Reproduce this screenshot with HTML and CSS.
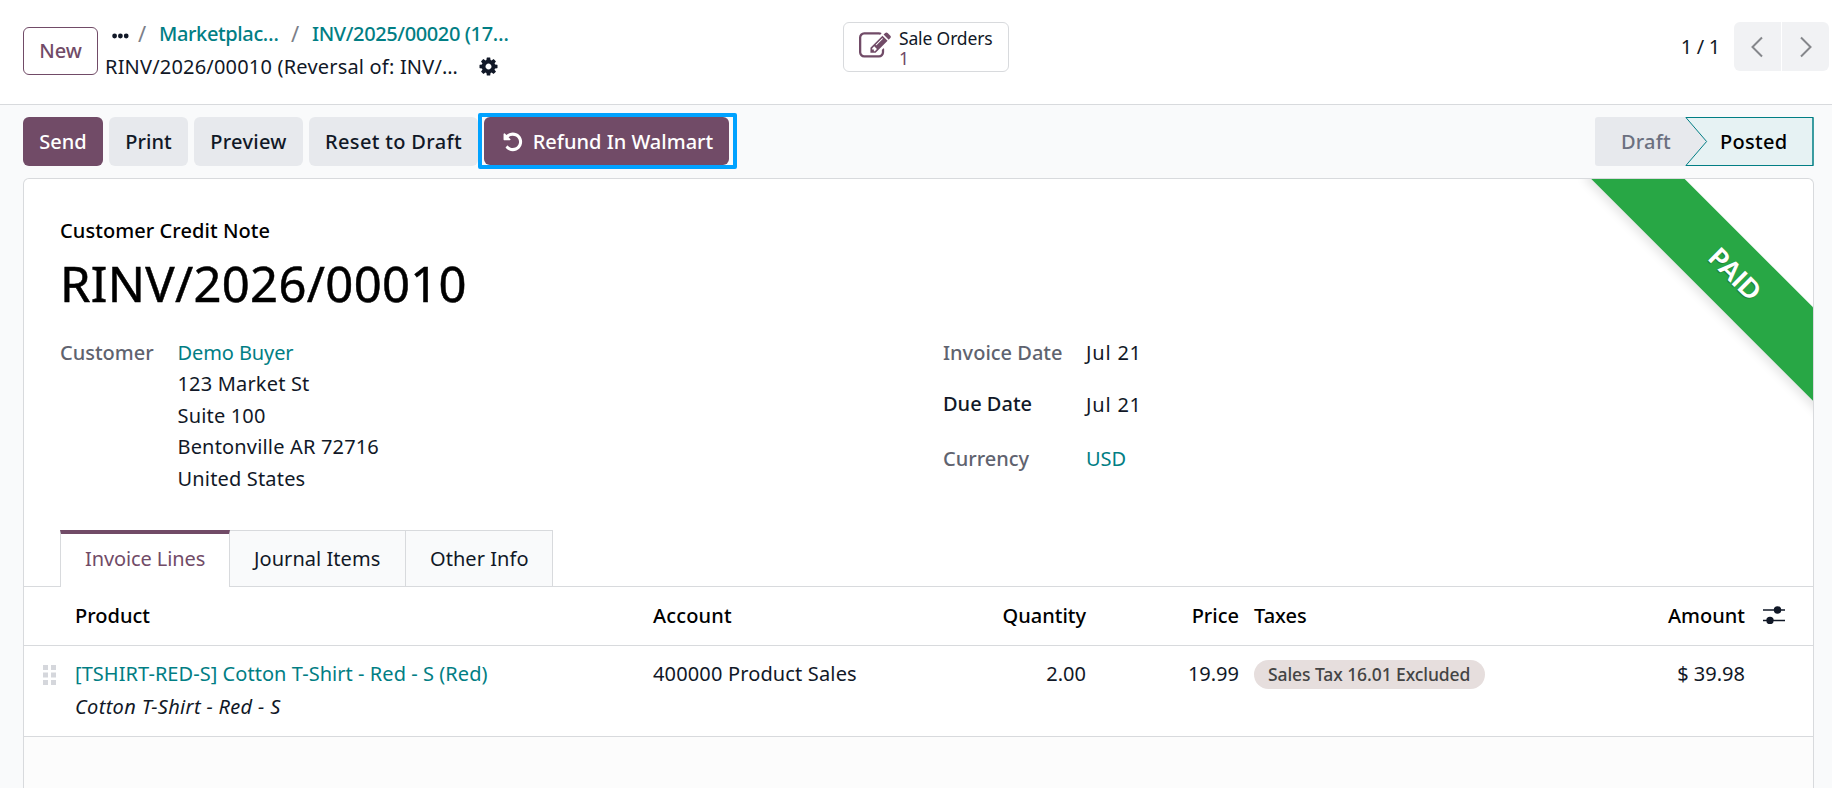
FILE: index.html
```html
<!DOCTYPE html>
<html lang="en">
<head>
    <meta charset="UTF-8">
    <meta name="viewport" content="width=device-width, initial-scale=1.0">
    <title>RINV/2026/00010</title>
    <link rel="stylesheet" href="styles.css">
</head>
<body>
    <header class="control-panel">
        <div class="panel-left">
            <button type="button" class="btn-new">New</button>
            <div class="breadcrumb">
                <div class="crumb-row">
                    <svg class="dots" viewBox="0 0 17 6"><circle cx="2.6" cy="3" r="2.4"/><circle cx="8.4" cy="3" r="2.4"/><circle cx="14.2" cy="3" r="2.4"/></svg>
                    <span class="slash">/</span>
                    <a class="crumb crumb-first">Marketplac…</a>
                    <span class="slash">/</span>
                    <a class="crumb crumb-second">INV/2025/00020 (17…</a>
                </div>
                <div class="crumb-row">
                    <span class="crumb-current">RINV/2026/00010 (Reversal of: INV/…</span>
                    <svg class="cog" viewBox="0 0 1792 1792"><path d="M1152 896q0-106-75-181t-181-75-181 75-75 181 75 181 181 75 181-75 75-181zm512-109v222q0 12-8 23t-20 13l-185 28q-19 54-39 91 35 50 107 138 10 12 10 25t-9 23q-27 37-99 108t-94 71q-12 0-26-9l-138-108q-44 23-91 38-16 136-29 186-7 28-36 28h-222q-14 0-24.5-8.5t-11.5-21.5l-28-184q-49-16-90-37l-141 107q-10 9-25 9-14 0-25-11-126-114-165-168-7-10-7-23 0-12 8-23 15-21 51-66.5t54-70.5q-27-50-41-99l-183-27q-13-2-21-12.5t-8-23.5v-222q0-12 8-23t19-13l186-28q14-46 39-92-40-57-107-138-10-12-10-24 0-10 9-23 26-36 98.5-107.5t94.5-71.5q13 0 26 10l138 107q44-23 91-38 16-136 29-186 7-28 36-28h222q14 0 24.5 8.5t11.5 21.5l28 184q49 16 90 37l142-107q9-9 24-9 13 0 25 10 129 119 165 170 7 8 7 22 0 12-8 23-15 21-51 66.5t-54 70.5q26 50 41 98l183 28q13 2 21 12.5t8 23.5z"/></svg>
                </div>
            </div>
        </div>
        <button type="button" class="stat-button">
            <svg class="stat-icon" viewBox="0 0 1792 1792"><path d="M888 1184l116-116-152-152-116 116v56h96v96h56zm440-720q-16-16-33 1l-350 350q-17 17-1 33t33-1l350-350q17-17 1-33zm80 594v190q0 119-84.5 203.5t-203.5 84.5h-832q-119 0-203.5-84.5t-84.5-203.5v-832q0-119 84.5-203.5t203.5-84.5h832q63 0 117 25 15 7 18 23 3 17-9 29l-49 49q-14 14-32 8-23-6-45-6h-832q-66 0-113 47t-47 113v832q0 66 47 113t113 47h832q66 0 113-47t47-113v-126q0-13 9-22l64-64q15-15 35-7t20 29zm-96-738l288 288-672 672h-288v-288zm444 132l-92 92-288-288 92-92q28-28 68-28t68 28l152 152q28 28 28 68t-28 68z"/></svg>
            <span class="stat-info">
                <span class="stat-text">Sale Orders</span>
                <span class="stat-value">1</span>
            </span>
        </button>
        <div class="pager">
            <span class="pager-text">1 / 1</span>
            <div class="pager-buttons">
                <button type="button" class="pager-prev"><svg class="chevron" viewBox="0 0 14 22"><path d="M12 1.5L2.5 11l9.500 9.500"/></svg></button>
                <button type="button" class="pager-next"><svg class="chevron" viewBox="0 0 14 22"><path d="M2 1.500L11.500 11L2 20.500"/></svg></button>
            </div>
        </div>
    </header>

    <div class="statusbar">
        <div class="actions">
            <button type="button" class="btn btn-primary btn-send">Send</button>
            <button type="button" class="btn btn-print">Print</button>
            <button type="button" class="btn btn-preview">Preview</button>
            <button type="button" class="btn btn-reset">Reset to Draft</button>
            <div class="highlight">
                <button type="button" class="btn btn-primary btn-refund">
                    <svg class="undo" viewBox="0 0 1792 1792"><path d="M1664 896q0 156-61 298t-164 245-245 164-298 61q-172 0-327-72.5t-264-204.5q-7-10-6.5-22.5t8.5-20.5l137-138q10-9 25-9 16 2 23 12 73 95 179 147t225 52q104 0 198.5-40.5t163.5-109.5 109.5-163.5 40.5-198.5-40.5-198.5-109.5-163.5-163.5-109.5-198.5-40.5q-98 0-188 35.5t-160 101.5l137 138q31 30 14 69-17 40-59 40h-448q-26 0-45-19t-19-45v-448q0-42 40-59 39-17 69 14l130 129q107-101 244.5-156.5t284.5-55.5q156 0 298 61t245 164 164 245 61 298z"/></svg>
                    <span>Refund In Walmart</span>
                </button>
            </div>
        </div>
        <div class="status">
            <div class="status-draft">Draft</div>
            <div class="status-posted">
                <svg class="status-arrow" viewBox="0 0 129 49"><path d="M.9.5H128V48.500H.9L21.600 24.500z"/><path d="M128 0V49"/></svg>
                <span>Posted</span>
            </div>
        </div>
    </div>

    <main class="sheet">
        <div class="ribbon-box"><div class="ribbon">PAID</div></div>
        <div class="sheet-head">
            <div class="move-type">Customer Credit Note</div>
            <h1 class="move-name">RINV/2026/00010</h1>
            <div class="groups">
                <div class="group">
                    <label>Customer</label>
                    <div class="address">
                        <a class="partner">Demo Buyer</a>
                        <div>123 Market St</div>
                        <div>Suite 100</div>
                        <div>Bentonville AR 72716</div>
                        <div>United States</div>
                    </div>
                </div>
                <div class="group group-dates">
                    <label>Invoice Date</label>
                    <span class="date">Jul 21</span>
                    <label class="label-due">Due Date</label>
                    <span class="date date-due">Jul 21</span>
                    <label>Currency</label>
                    <a>USD</a>
                </div>
            </div>
        </div>

        <nav class="tabs">
            <a class="tab tab-active">Invoice Lines</a>
            <a class="tab tab-journal">Journal Items</a>
            <a class="tab tab-other">Other Info</a>
        </nav>

        <div class="row row-head">
            <span></span>
            <span>Product</span>
            <span class="account">Account</span>
            <span class="num">Quantity</span>
            <span class="num">Price</span>
            <span class="taxes">Taxes</span>
            <span class="num">Amount</span>
            <svg class="adjust" viewBox="0 0 22 18"><path d="M0 4h22M0 14.500h22"/><circle cx="14.500" cy="4" r="3.700"/><circle cx="7" cy="14.500" r="3.700"/></svg>
        </div>
        <div class="row row-line">
            <svg class="handle" viewBox="0 0 13 20"><path d="M0 0h5v5H0zM8 0h5v5H8zM0 7.500h5v5H0zM8 7.500h5v5H8zM0 15h5v5H0zM8 15h5v5H8z"/></svg>
            <div class="product">
                <a class="product-link">[TSHIRT-RED-S] Cotton T-Shirt - Red - S (Red)</a>
                <div class="product-note">Cotton T-Shirt - Red - S</div>
            </div>
            <span class="account">400000 Product Sales</span>
            <span class="num">2.00</span>
            <span class="num">19.99</span>
            <span class="taxes"><span class="tag">Sales Tax 16.01 Excluded</span></span>
            <span class="num">$ 39.98</span>
        </div>
        <div class="list-rest"></div>
    </main>
</body>
</html>
```
FILE: styles.css
```css
* {
    box-sizing: border-box;
}
body {
    margin: 0;
    height: 788px;
    overflow: hidden;
    display: flex;
    flex-direction: column;
    background: #f9fafb;
    color: #111827;
    font-family: "Noto Sans", sans-serif;
    font-size: 20px;
    line-height: 31.5px;
}
button {
    font: inherit;
    color: inherit;
    border: none;
    padding: 0;
    cursor: pointer;
}
a {
    color: #017e84;
}
svg {
    display: block;
    flex: none;
}

/* control panel */
.control-panel {
    height: 105px;
    flex: none;
    display: grid;
    grid-template-columns: 820px 166px 1fr;
    padding: 22px 3px 0 23px;
    background: #fff;
    border-bottom: 1px solid #d8dadd;
}
.panel-left {
    display: flex;
    gap: 7px;
}
.btn-new {
    width: 75px;
    height: 48px;
    margin-top: 5px;
    padding-bottom: 1px;
    border: 1px solid #714b67;
    border-radius: 6px;
    background: #fff;
    color: #714b67;
    font-weight: 500;
}
.crumb-row {
    display: flex;
    align-items: center;
    height: 33px;
    margin-top: -5px;
    white-space: nowrap;
}
.crumb-row + .crumb-row {
    margin-top: 0;
}
.dots {
    width: 17px;
    height: 6px;
    margin: 4px 9px 0 7px;
    fill: #111827;
}
.slash {
    width: 21px;
    color: #7c7f89;
    font-size: 22px;
}
.crumb {
    font-weight: 500;
    letter-spacing: -.38px;
}
.crumb-first {
    width: 132px;
}
.crumb-current {
    letter-spacing: .19px;
}
.cog {
    width: 21px;
    height: 21px;
    margin-left: 20px;
    fill: #111827;
}
.stat-button {
    height: 50px;
    display: flex;
    padding: 7px 0 0 15px;
    border: 1px solid #d8dadd;
    border-radius: 6px;
    background: #fff;
}
.stat-icon {
    width: 32px;
    height: 32px;
    fill: #714b67;
}
.stat-info {
    display: flex;
    flex-direction: column;
    align-items: flex-start;
    margin-top: -2px;
    margin-left: 8px;
    font-size: 17.5px;
    letter-spacing: -.15px;
    line-height: 20px;
}
.stat-value {
    color: #714b67;
}
.pager {
    display: flex;
    justify-content: flex-end;
    gap: 14px;
    line-height: 49px;
}
.pager-text {
    letter-spacing: -.3px;
}
.pager-buttons {
    display: flex;
    gap: 1px;
}
.pager-buttons button {
    width: 47px;
    height: 49px;
    display: flex;
    align-items: center;
    justify-content: center;
    background: #f1f2f4;
}
.pager-buttons .pager-prev {
    border-radius: 6px 0 0 6px;
    padding-right: 2px;
}
.pager-buttons .pager-next {
    border-radius: 0 6px 6px 0;
}
.chevron {
    width: 14px;
    height: 22px;
    fill: none;
    stroke: #85878b;
    stroke-width: 2;
}

/* action buttons and status */
.statusbar {
    height: 73px;
    flex: none;
    display: flex;
    justify-content: space-between;
    padding: 8px 18px 0 23px;
}
.actions {
    display: flex;
}
.btn {
    height: 49px;
    margin: 4px 6px 0 0;
    border-radius: 6px;
    background: #e7e9ed;
    font-weight: 500;
}
.btn-primary {
    background: #714b67;
    color: #fff;
}
.btn-send {
    width: 80px;
}
.btn-print {
    width: 79px;
}
.btn-preview {
    width: 109px;
    letter-spacing: .3px;
}
.btn-reset {
    width: 169px;
    margin-right: 0;
    letter-spacing: .33px;
}
.highlight {
    width: 259px;
    height: 56px;
    border: 4px solid #00a2ff;
    border-radius: 2px;
    padding-left: 2px;
}
.btn-refund {
    width: 245px;
    height: 48px;
    margin: 0;
    display: flex;
    align-items: center;
    padding: 2px 0 0 18px;
}
.undo {
    width: 21.7px;
    height: 21.7px;
    margin-right: 9px;
    fill: #fff;
}
.status {
    display: flex;
    margin-top: 4px;
    height: 49px;
    line-height: 49px;
    font-weight: 500;
}
.status-draft {
    width: 112px;
    padding-left: 26px;
    border-radius: 3px;
    background: #e7e9ed;
    color: #6b7080;
    letter-spacing: .2px;
}
.status-posted {
    position: relative;
    width: 129px;
    margin-left: -22px;
    padding-left: 35px;
    color: #000;
    letter-spacing: .3px;
}
.status-posted span {
    position: relative;
}
.status-arrow {
    position: absolute;
    left: 0;
    top: 0;
    width: 129px;
    height: 49px;
    fill: #e6f2f3;
    stroke: #017e84;
}

/* form sheet */
.sheet {
    position: relative;
    flex: 1;
    display: flex;
    flex-direction: column;
    margin: 0 18px 0 23px;
    border: 1px solid #d8dadd;
    border-bottom: none;
    border-radius: 6px 6px 0 0;
    background: #fff;
}
.ribbon-box {
    position: absolute;
    top: 0;
    right: 0;
    width: 260px;
    height: 260px;
    overflow: hidden;
    border-radius: 0 6px 0 0;
}
.ribbon {
    position: absolute;
    top: 63px;
    right: -96px;
    width: 350px;
    height: 66px;
    transform: rotate(45deg);
    background: #28a745;
    box-shadow: 0 5px 10px rgba(0, 0, 0, .1);
    color: #fff;
    font-family: Lato, sans-serif;
    font-size: 26px;
    font-weight: 900;
    line-height: 63px;
    text-align: center;
    text-shadow: 0 1px 1px rgba(0, 0, 0, .3);
}
.sheet-head {
    height: 351px;
    padding: 36px 36px 0;
}
.move-type {
    color: #000;
    font-weight: 500;
    letter-spacing: .07px;
}
.move-name {
    margin: 3px 0 0;
    color: #000;
    font-size: 49px;
    font-weight: 400;
    letter-spacing: .3px;
    line-height: 66px;
    -webkit-text-stroke: .5px #000;
}
.groups {
    display: grid;
    grid-template-columns: 883px 1fr;
    margin-top: 21px;
}
.group {
    display: grid;
    grid-template-columns: 118px 1fr;
    align-content: start;
}
.group-dates {
    grid-template-columns: 143px 1fr;
    grid-template-rows: 51px 55px 32px;
}
.group label {
    color: #5f636f;
    font-weight: 500;
}
.group .label-due {
    color: #111827;
}
.address {
    margin-left: -.5px;
    letter-spacing: .17px;
}
.partner {
    letter-spacing: -.1px;
}
.date {
    letter-spacing: .8px;
}
.date-due {
    margin-top: 1px;
}
.tabs {
    height: 57px;
    display: flex;
    padding-left: 36px;
    border-bottom: 1px solid #d8dadd;
}
.tab {
    height: 56px;
    padding: 12px 0 0 24px;
    border: 1px solid #d8dadd;
    border-left: none;
    border-bottom: none;
    background: #f9fafb;
    color: #111827;
    letter-spacing: .05px;
}
.tab-active {
    width: 170px;
    height: 57px;
    padding-top: 9px;
    border-top: 4px solid #714b67;
    border-left: 1px solid #d8dadd;
    background: #fff;
    color: #714b67;
    letter-spacing: -.1px;
}
.tab-journal {
    width: 176px;
}
.tab-other {
    width: 147px;
}

/* invoice lines */
.row {
    display: grid;
    grid-template-columns: 51px 579px 232px 200px 153px 347px 159px 1fr;
    border-bottom: 1px solid #d8dadd;
}
.row-head {
    height: 59px;
    padding-top: 13px;
    color: #000;
    font-weight: 500;
}
.row-line {
    height: 91px;
    padding-top: 12px;
}
.num {
    text-align: right;
}
.taxes {
    padding-left: 15px;
}
.adjust {
    width: 22px;
    height: 18px;
    margin: 6px 0 0 18px;
    fill: #111827;
}
.adjust path {
    stroke: #111827;
    stroke-width: 1.5;
}
.handle {
    width: 13px;
    height: 20px;
    margin: 7px 0 0 19px;
    fill: #d5d7dc;
}
.product-link {
    letter-spacing: .05px;
}
.product-note {
    margin-top: 1px;
    font-style: italic;
    letter-spacing: .33px;
}
.account {
    margin-left: -1px;
    letter-spacing: .15px;
}
.tag {
    display: block;
    width: 231px;
    height: 29px;
    margin-top: 2px;
    padding-left: 14px;
    border-radius: 15px;
    background: #e6dedd;
    color: #444;
    font-size: 17.5px;
    font-weight: 500;
    letter-spacing: -.08px;
    line-height: 29px;
}
.list-rest {
    flex: 1;
    background: #fcfcfc;
}
```
